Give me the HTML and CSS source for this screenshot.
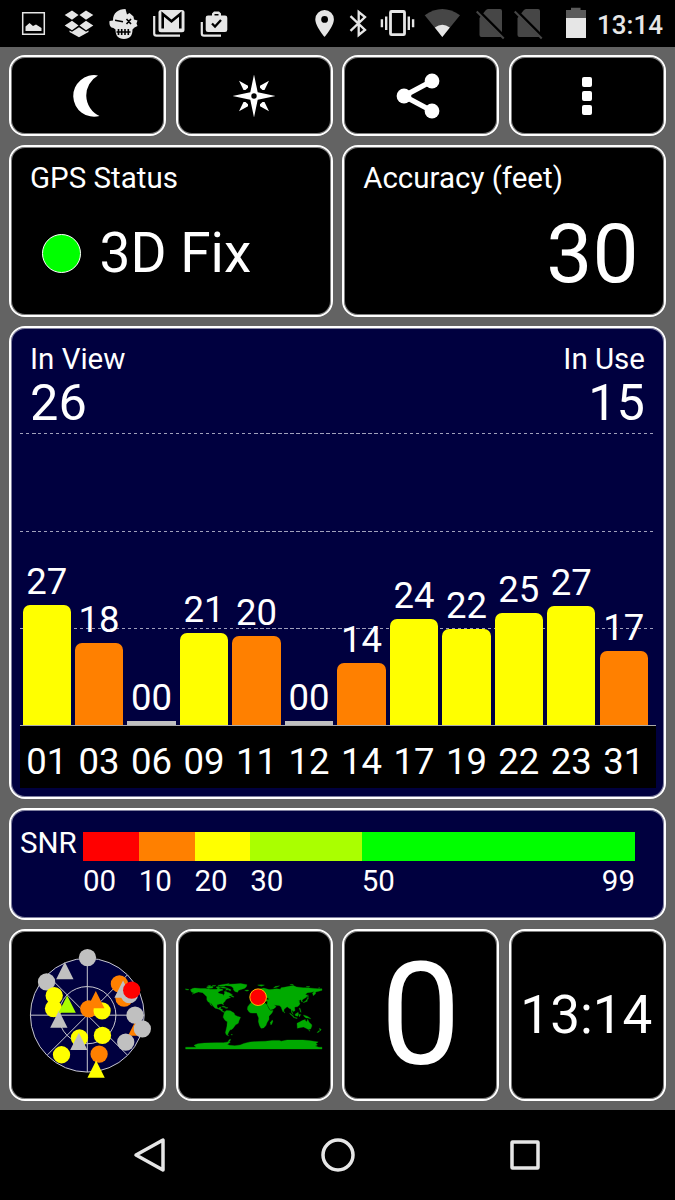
FILE: index.html
```html
<!DOCTYPE html>
<html lang="en">
<head>
  <meta charset="UTF-8" />
  <meta name="viewport" content="width=device-width, initial-scale=1.0"/>
  <title>GPS Status</title>
  <link rel="stylesheet" href="styles.css">
</head>
<body>
  <header class="status-bar">
    <div class="status-icons">
      <svg viewBox="11 0 45 47" width="45" height="47">
        <path d="M22.7 12.7h21.6v21.6H22.7z" fill="none" stroke="#e6e6e6" stroke-width="1.5"/>
        <path d="M25.5 31v-4.500l4-3.500 3.500 3 3-1.500 5.500 3.500v3z"/>
      </svg>
      <svg viewBox="56 0 45 47" width="45" height="47">
        <path d="M72 10.500l6.500 4.500-6.500 4.700-7.300-4.700zM86 10.500l7.300 4.500-7.300 4.700-6.500-4.700zM72 20.700l6.500 4.800-6.500 4.700-7.300-4.700zM86 20.700l7.300 4.800-7.300 4.700-6.500-4.700zM79 27.200l7 4.600 2.500-1.300v1.500L79 37.300 69.500 32v-1.500l2.500 1.300z"/>
      </svg>
      <svg viewBox="101 0 45 47" width="45" height="47">
        <path d="M125.500 9l1.500 5.500 2.500-1.500 4 3.500.5 3 3.500 1-1 3 1 2.500-3 1.500-2 2c0 6-2.500 9.500-8.500 9.500s-8.500-3.500-8.500-9.500l-2-1.500c-3 0-4.500-3-4-7l3.500-.5C113 13 118 9 125.500 9z"/>
        <g fill="none" stroke="#000" stroke-width="1.600">
          <path d="M115 20.300l8 1.500M126.500 19l4.500 5M131 19l-4.500 5M116.500 32h14M118.500 29v6M121.700 29v6M125 29v6M128.300 29v6"/>
        </g>
      </svg>
      <svg viewBox="146 0 45 47" width="45" height="47">
        <path d="M154.200 16v17.500q0 2.200 2.200 2.200H180" fill="none" stroke="#e6e6e6" stroke-width="2.200"/>
        <rect x="158.500" y="10" width="26" height="22.300" rx="2.500"/>
        <path d="M162.700 28.500V14l8.800 7.300 8.800-7.300v14.500" fill="none" stroke="#000" stroke-width="2.600"/>
      </svg>
      <svg viewBox="191 0 45 47" width="45" height="47">
        <path d="M201.800 22v11.500q0 2.200 2.200 2.200h17" fill="none" stroke="#e6e6e6" stroke-width="2.200"/>
        <path fill-rule="evenodd" d="M214 11.500h5l2 2v2h4q2.300 0 2.300 2.300v12q0 2.300-2.300 2.300h-17q-2.300 0-2.300-2.300v-12q0-2.300 2.300-2.300h4v-2zM214.500 14v1.500h4V14z"/>
        <path d="M212 23.500l3 3 6-6.500" fill="none" stroke="#000" stroke-width="2.300"/>
      </svg>
    </div>
    <div class="status-icons">
      <svg viewBox="310 0 32 47" width="32" height="47">
        <path fill-rule="evenodd" d="M324.600 10a9.300 9.300 0 0 0-9.300 9.300c0 7 9.300 17.700 9.300 17.700s9.300-10.700 9.300-17.700a9.300 9.300 0 0 0-9.300-9.300zm0 6a3.400 3.400 0 1 1 0 6.800 3.400 3.400 0 0 1 0-6.800z"/>
      </svg>
      <svg viewBox="342 0 32 47" width="32" height="47">
        <path d="M350.500 16.200l14.500 13.800-6.300 5V12l6.300 5-14.500 13.800" fill="none" stroke="#e6e6e6" stroke-width="2.300"/>
      </svg>
      <svg viewBox="374 0 46 47" width="46" height="47">
        <rect x="390.500" y="11.500" width="14" height="23.200" rx="1" fill="none" stroke="#e6e6e6" stroke-width="2.800"/>
        <path d="M385 16.500h2.400v13.500H385zM380.700 19.300h2.400v8h-2.400zM407.600 16.500h2.400v13.500h-2.400zM411.900 19.300h2.400v8h-2.400z"/>
      </svg>
      <svg viewBox="420 0 50 47" width="50" height="47">
        <path class="dim" d="M424.700 15.300Q442.300 2.800 460 15.300L442.300 37z"/>
        <path d="M434.800 27.500q7.500-5.500 15 0L442.300 37z"/>
      </svg>
      <svg viewBox="470 0 38 47" width="38" height="47">
        <path class="dim" d="M479.500 18l6-7.500q1-1.500 2.500-1.500h12q2 0 2 2v24.500q0 1.500-1.500 1.500h-19q-2 0-2-2z"/>
        <path d="M479 11l25.500 25.500" stroke="#000" stroke-width="2.500"/>
        <path d="M476.700 11.500l27 27" stroke="#464646" stroke-width="2"/>
      </svg>
      <svg viewBox="470 0 45 47" width="45" height="47">
        <path class="dim" d="M479.500 18l6-7.500q1-1.500 2.500-1.500h12q2 0 2 2v24.500q0 1.500-1.500 1.500h-19q-2 0-2-2z"/>
        <path d="M479 11l25.500 25.500" stroke="#000" stroke-width="2.500"/>
        <path d="M476.700 11.500l27 27" stroke="#464646" stroke-width="2"/>
      </svg>
      <svg viewBox="553 0 44 47" width="44" height="47">
        <path class="battery-top" d="M566 18v-8h5V7.700h9.500V10h5.500v8z"/>
        <path d="M566 18h20v20h-20z"/>
      </svg>
      <span class="clock">13:14</span>
    </div>
  </header>

  <main class="dashboard">
    <button class="tile" title="Night mode">
      <svg viewBox="0 0 44 44" width="44" height="44">
        <path d="M32 1.500A20.800 20.800 0 1 0 33.500 42 22.700 22.700 0 0 1 32 1.500z"/>
      </svg>
    </button>
    <button class="tile" title="Compass">
      <svg viewBox="-22 -22 44 44" width="44" height="44">
        <path fill-rule="evenodd" d="M0-21.500L3.700-3.700 21.500 0 3.700 3.700 0 21.500-3.700 3.700-21.500 0-3.700-3.700zM0-2.700A2.700 2.700 0 1 0 0 2.700 2.700 2.700 0 0 0 0-2.700z"/>
        <path d="M-15-15.300l9 5v2l-2.500 2.300h-2zM15-15.300l-9 5v2l2.500 2.300h2zM-15 15.300l9-5v-2l-2.500-2.300h-2zM15 15.300l-9-5v-2l2.500-2.300h2z"/>
      </svg>
    </button>
    <button class="tile" title="Share">
      <svg viewBox="-26 -23 52 46" width="52" height="46">
        <path d="M11-15L-17 0l28 15" fill="none" stroke="#fff" stroke-width="5.300"/>
        <circle cx="-17" cy="0" r="7.400"/>
        <circle cx="11" cy="-15" r="7.400"/>
        <circle cx="11" cy="15" r="7.400"/>
      </svg>
    </button>
    <button class="tile" title="Menu">
      <svg viewBox="0 0 10 38" width="10" height="38">
        <rect width="10" height="10" rx="2"/>
        <rect y="14" width="10" height="10" rx="2"/>
        <rect y="28" width="10" height="10" rx="2"/>
      </svg>
    </button>

    <section class="tile info">
      <div class="label">GPS Status</div>
      <div class="fix"><span class="led"></span>3D Fix</div>
    </section>
    <section class="tile info">
      <div class="label">Accuracy (feet)</div>
      <div class="accuracy">30</div>
    </section>

    <section class="tile satellites">
      <div class="gridline g1"></div>
      <div class="gridline g2"></div>
      <div class="gridline g3"></div>
      <div class="counts">
        <div>
          <div class="label">In View</div>
          <div class="count">26</div>
        </div>
        <div class="right">
          <div class="label">In Use</div>
          <div class="count">15</div>
        </div>
      </div>
      <div class="bars">
        <div class="sat">27<div class="bar yellow" style="height: 120px"></div></div>
        <div class="sat">18<div class="bar orange" style="height: 82px"></div></div>
        <div class="sat">00<div class="bar none" style="height: 4px"></div></div>
        <div class="sat">21<div class="bar yellow" style="height: 92px"></div></div>
        <div class="sat">20<div class="bar orange" style="height: 89px"></div></div>
        <div class="sat">00<div class="bar none" style="height: 4px"></div></div>
        <div class="sat">14<div class="bar orange" style="height: 62px"></div></div>
        <div class="sat">24<div class="bar yellow" style="height: 106px"></div></div>
        <div class="sat">22<div class="bar yellow" style="height: 96px"></div></div>
        <div class="sat">25<div class="bar yellow" style="height: 112px"></div></div>
        <div class="sat">27<div class="bar yellow" style="height: 119px"></div></div>
        <div class="sat">17<div class="bar orange" style="height: 74px"></div></div>
      </div>
      <div class="axis">
        <span>01</span><span>03</span><span>06</span><span>09</span><span>11</span><span>12</span>
        <span>14</span><span>17</span><span>19</span><span>22</span><span>23</span><span>31</span>
      </div>
    </section>

    <section class="tile snr">
      <div class="snr-name">SNR</div>
      <div class="scale">
        <div class="band red"></div>
        <div class="band orange"></div>
        <div class="band yellow"></div>
        <div class="band lime"></div>
        <div class="band green"></div>
        <span>00</span><span>10</span><span>20</span><span>30</span>
        <span class="ends"><span>50</span><span>99</span></span>
      </div>
    </section>

    <section class="tile">
      <svg class="fill" viewBox="22 20 453 499">
        <defs>
          <circle id="c" r="26"/>
          <path id="t" d="M0-26L26 26H-26z"/>
        </defs>
        <g fill="#00003f" stroke="#c8c8d0" stroke-width="3">
          <circle cx="247.500" cy="270" r="171"/>
          <circle cx="247.500" cy="270" r="86"/>
          <path d="M247.500 99v342M76.500 270h342M127 149l241 241M368 149L127 390"/>
        </g>
        <g fill="#c0c0c0">
          <use href="#c" x="248" y="97"/>
          <use href="#t" x="180" y="136"/>
          <use href="#c" x="125" y="170"/>
        </g>
        <g fill="#ff8000">
          <use href="#c" x="344" y="176"/>
          <use href="#c" x="358" y="219"/>
          <use href="#t" x="396" y="306"/>
          <use href="#c" x="252" y="251"/>
          <use href="#c" x="283" y="387"/>
        </g>
        <g fill="#ff0">
          <use href="#c" x="148" y="211"/>
          <use href="#c" x="146" y="250"/>
          <use href="#c" x="292" y="257"/>
          <use href="#c" x="293" y="331"/>
          <use href="#c" x="224" y="338"/>
          <use href="#c" x="170" y="389"/>
          <use href="#t" x="274" y="432"/>
        </g>
        <use href="#t" x="273" y="223" fill="#ff8000"/>
        <g fill="#c0c0c0">
          <use href="#c" x="374" y="208"/>
          <use href="#t" x="355" y="192"/>
          <use href="#t" x="162" y="282"/>
          <use href="#t" x="222" y="349"/>
          <use href="#c" x="391" y="270"/>
          <use href="#c" x="413" y="311"/>
          <use href="#c" x="363" y="351"/>
        </g>
        <use href="#t" x="187" y="237" fill="#af0"/>
        <use href="#c" x="381" y="195" fill="#f00"/>
      </svg>
    </section>

    <section class="tile">
      <svg class="fill" viewBox="21 20 453 499">
        <!-- coordinates are longitude, -latitude -->
        <g transform="translate(245 269.500) scale(1.139)" fill="#0a0" stroke="#0a0" stroke-width=".8">
          <path d="M-168-66L-162-70-156-71-141-70-128-70-115-68-108-68-98-68-94-72-90-69-82-68-82-65-87-64-94-61-94-58-88-56-82-55-80-51-79-54-77-57-78-62-73-62-70-60-65-59-62-57-56-53-60-50-66-50-65-48-61-46-66-44-70-43-74-40-76-36-81-31-80-26-82-28-84-30-90-29-97-27-97-21-94-18-91-19-90-21-87-21-88-16-83-15-83-10-79-9-77-8-80-7-85-10-88-13-94-16-102-18-106-22-109-26-113-31-115-31-110-23-115-28-117-33-121-35-124-40-124-48-130-54-135-59-146-61-152-59-163-55-157-58-165-61-165-64z"/>
          <path d="M-73-78L-65-81-50-82-35-83-18-80-20-74-25-70-40-65-43-60-50-62-54-67-54-71-60-76z"/>
          <path d="M-125-74l8-2 10 1-2 4-12 1zM-100-74l8-1 3 3-8 1zM-90-74l12 0 10 4 7 3 0 3-5-1 0-2-9 2 4-5-12-1zM-95-78l10-2 20-3-2 3-12 4-10 0zM-122-77l8-1-2 2zM-110-78l10 0-4 2zM-59-51l6 2 0 2-6-1zM-24-65l8-1 3 1-5 2z"/>
          <path d="M-85-22l6-1 5 2-1 1zM-74-20l6 1-3 1-4 0z"/>
          <path d="M-77-8L-72-12-62-11-52-5-50 0-44 3-35 6-39 15-41 22-48 26-54 34-58 38-62 39-65 43-67 47-69 52-66 55-72 53-75 47-73 38-71 30-70 18-76 14-81 6-80 1z"/>
          <path d="M-60 51l4 1-3 1zM-65 65l4-1-2 5-6 3z"/>
          <path d="M-17-15L-16-22-10-30-5-35 10-37 11-34 20-31 30-31 34-28 39-18 43-12 51-12 48-5 40 3 40 12 35 20 32 28 26 34 19 35 15 28 12 17 13 8 9-1 8-5-5-5-10-6-14-10z"/>
          <path d="M49 13l1 4-3 8-3 0 0-6z"/>
          <path d="M-9-43L-1-44-4-48 3-51 9-54 8-57 13-56 20-55 22-60 18-62 14-60 6-59 6-63 14-68 26-71 40-67 44-67 50-68 60-69 70-68 72-72 80-73 90-75 104-78 113-74 130-72 140-72 160-70 170-69 180-69 180-65 172-63 163-61 163-56 157-51 155-58 160-62 152-60 142-59 136-55 141-52 139-47 132-43 127-39 129-35 126-35 124-40 118-39 122-37 119-35 122-31 120-26 115-22 108-21 108-16 109-12 105-9 100-13 102-6 104-1 100-6 98-16 94-17 88-22 80-15 79-9 77-8 73-18 72-21 67-25 57-26 52-28 49-30 56-25 59-22 52-16 44-13 39-21 35-28 36-36 27-37 27-40 40-41 38-44 33-46 29-42 24-38 20-42 13-45 17-40 8-44 0-39-6-36-9-37z"/>
          <path d="M-10-52l4-3 0 3zM-5-50l6-1-4-8-3 0 1 4zM10-79l10-1 8 1-8 3zM52-71l4-4 12-2-8 4zM95-80l6-1 4 2zM138-75l10 0-4 2zM170-71l4-1 0 1zM143-54l1 8-2 0 0-6z"/>
          <path d="M141-44l4 1-5 2zM141-41l0 5-9 3-2 0 6-3 4-5zM80-9l2 3-2 0zM95-5l11 9-1 2-10-9zM109-2l8-5 1 5-2 5-6-1zM119-1l5 0-2 3-2 3zM105 6l10 2-1 1-9-2zM120-18l2 0 3 11-2-1zM131 0l10 3 9 6 0 1-7-2-5 0-5-4z"/>
          <path d="M114 22L122 18 129 14 136 12 136 15 140 18 142 11 146 19 153 26 153 30 150 37 144 38 138 35 131 32 124 33 115 35zM145 41l3 0-1 2zM173 35l5 3-3 4zM172 41l-5 5 3 0 4-4z"/>
          <path d="M-180-69l9 2-3 1-6-1zM-180 90V85H-152L-158 80-148 76-130 74-100 73-80 73-68 71-62 72-70 77-64 80-50 81-36 79-26 75-10 71 10 70 30 69 50 67 68 67 72 69 88 66 110 66 130 66 150 68 170 71 164 75 168 79 162 82 172 85H180V90z"/>
        </g>
        <circle cx="258" cy="216" r="25" fill="#f00" stroke="#fb0" stroke-width="3"/>
      </svg>
    </section>

    <section class="tile speed">0</section>
    <section class="tile time">13:14</section>
  </main>

  <nav class="nav-bar">
    <svg viewBox="0 0 36 36" width="36" height="36"><path d="M4 18L31 3v30z"/></svg>
    <svg viewBox="0 0 36 36" width="36" height="36"><circle cx="18" cy="18" r="15"/></svg>
    <svg viewBox="0 0 36 36" width="36" height="36"><rect x="5" y="5" width="26" height="26" rx=".5"/></svg>
  </nav>
</body>
</html>
```
FILE: styles.css
```css
* {
  box-sizing: border-box;
}

body {
  margin: 0;
  width: 675px;
  height: 1200px;
  display: flex;
  flex-direction: column;
  background: #636363;
  color: #fff;
  font-family: Roboto, sans-serif;
  overflow: hidden;
}

svg {
  display: block;
  flex: none;
}

.status-bar {
  height: 47px;
  padding: 0 11px;
  display: flex;
  justify-content: space-between;
  background: #000;
  color: #e6e6e6;
}

.status-icons {
  display: flex;
  fill: #e6e6e6;
}

.status-icons .dim {
  fill: #464646;
}

.status-icons .battery-top {
  fill: #5a5a5a;
}

.clock {
  width: 67px;
  font-size: 26px;
  font-weight: 500;
  line-height: 50px;
  white-space: nowrap;
}

.dashboard {
  height: 1063px;
  padding: 8px 9px 9px;
  display: grid;
  grid-template-columns: repeat(4, 1fr);
  grid-template-rows: 81.3px 172px 473px 111.5px 172px;
  gap: 9px 9.3px;
}

.tile {
  display: flex;
  align-items: center;
  justify-content: center;
  min-width: 0;
  padding: 1px;
  border: 2px solid #fff;
  border-radius: 16px;
  box-shadow: inset 0 0 0 1px rgba(255, 255, 255, 0.5);
  background: #000;
  color: #fff;
  fill: #fff;
  overflow: hidden;
}

.fill {
  width: 100%;
  height: 100%;
}

.label {
  font-size: 29.5px;
  line-height: 30px;
}

.info {
  grid-column: span 2;
  display: block;
  padding: 16px 19px 0;
}

.fix {
  display: flex;
  align-items: center;
  margin-top: 30px;
  padding-left: 12px;
  font-size: 55px;
  line-height: 60px;
}

.led {
  width: 39px;
  height: 39px;
  margin-right: 18.5px;
  border: 1.5px solid #fff;
  border-radius: 50%;
  background: #0f0;
}

.accuracy {
  margin-top: 16px;
  padding-right: 6.5px;
  font-size: 82px;
  line-height: 90px;
  text-align: right;
}

/* satellite chart */
.satellites {
  grid-column: span 4;
  position: relative;
  display: flex;
  flex-direction: column;
  align-items: stretch;
  justify-content: flex-start;
  padding: 16px 8.5px 9.5px;
  background: #00003f;
}

.counts {
  display: flex;
  justify-content: space-between;
  padding: 0 10.5px;
}

.count {
  font-size: 50.5px;
  line-height: 57px;
}

.right {
  text-align: right;
}

.gridline {
  position: absolute;
  left: 8.5px;
  right: 8.5px;
  height: 1px;
  background: repeating-linear-gradient(90deg, #a0a0bc 0 3.5px, transparent 3.5px 6px);
}

.g1 {
  top: 105px;
}

.g2 {
  top: 202.5px;
}

.g3 {
  top: 300px;
}

.bars {
  position: relative;
  flex: 1;
  display: flex;
  align-items: flex-end;
  gap: 4.2px;
  padding: 0 7.5px 0 3px;
  border-bottom: 1.5px solid #aaa;
}

.sat {
  flex: 1;
  font-size: 36.5px;
  line-height: 36px;
  text-align: center;
}

.bar {
  margin-top: 5px;
  border-radius: 7px 7px 0 0;
}

.axis {
  display: flex;
  gap: 4.2px;
  height: 61.5px;
  padding: 7.5px 7.5px 0 3px;
  background: #000;
  font-size: 36.5px;
  line-height: 55px;
  text-align: center;
}

.axis span {
  flex: 1;
}

.red {
  background: #f00;
}

.orange {
  background: #ff8000;
}

.yellow {
  background: #ff0;
}

.lime {
  background: #af0;
}

.green {
  background: #0f0;
}

.none {
  background: #c0c0c0;
  border-radius: 0;
}

/* signal strength legend */
.snr {
  grid-column: span 4;
  align-items: flex-start;
  padding: 21.5px 29px 0 9px;
  background: #00003f;
  font-size: 29.5px;
}

.snr-name {
  width: 63px;
  line-height: 22px;
}

.scale {
  flex: 1;
  display: grid;
  grid-template-columns: 10fr 10fr 10fr 20fr 49fr;
  row-gap: 3px;
  line-height: 35px;
}

.band {
  height: 29.5px;
}

.ends {
  display: flex;
  justify-content: space-between;
}

.speed {
  padding-top: 2px;
  font-size: 143px;
}

.time {
  padding-right: 3px;
  font-size: 53px;
}

.nav-bar {
  flex: 1;
  display: flex;
  justify-content: center;
  gap: 151.5px;
  padding-top: 27px;
  background: #000;
  fill: none;
  stroke: #e6e6e6;
  stroke-width: 3.5;
  stroke-linejoin: round;
}
```
